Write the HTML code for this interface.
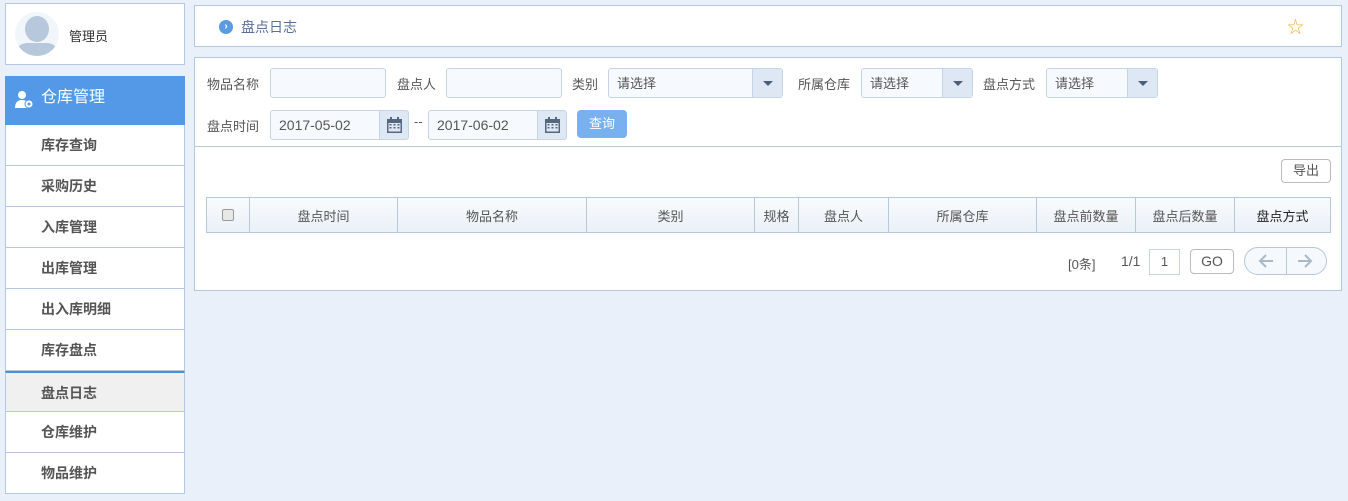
<!DOCTYPE html><html><head><meta charset="utf-8"><style>
*{box-sizing:border-box;margin:0;padding:0}
body{width:1348px;height:501px;background:#e9f0f9;font-family:"Liberation Sans","Noto Sans CJK SC",sans-serif;font-size:13px;color:#555;position:relative;overflow:hidden}
.a{position:absolute}
.box{background:#fff;border:1px solid #b5c8df}
.item{position:absolute;left:5px;width:180px;height:41px;background:#fff;border:1px solid #b5c8df;border-top:none;font-weight:bold;font-size:14px;color:#555;padding-left:35px;line-height:40px}
.inp{position:absolute;height:30px;background:#f6f9fd;border:1px solid #c5d4e6;border-radius:3px;font-size:14px;color:#555;line-height:28px;padding-left:8px}
.lbl{position:absolute;font-size:13px;color:#555}
.sel{position:absolute;height:30px;background:#f6f9fd;border:1px solid #c5d4e6;border-radius:3px;font-size:13px;line-height:30px;padding-left:8px;color:#555}
.sel i{position:absolute;right:0;top:0;width:30px;height:28px;background:#dde8f4;border-left:1px solid #c5d4e6}
.sel i:after{content:"";position:absolute;left:10px;top:12px;border:5px solid transparent;border-top:5px solid #4a5f78;border-bottom:0}
.cal{position:absolute;width:30px;height:30px;background:#dde8f4;border:1px solid #c5d4e6;border-radius:0 3px 3px 0}
th{font-weight:normal;border:1px solid #b5c8df;font-size:13px;color:#555}
</style></head><body>
<div class="a box" style="left:5px;top:3px;width:180px;height:62px">
<div class="a" style="left:9px;top:8px;width:44px;height:44px;border-radius:50%;background:#f1f6fb;overflow:hidden">
<div class="a" style="left:10px;top:4px;width:24px;height:26px;border-radius:50%;background:#b7c8dc"></div>
<div class="a" style="left:0;top:31px;width:44px;height:20px;border-radius:12px 12px 0 0;background:#b7c8dc"></div></div>
<div class="a" style="left:63px;top:22px;font-size:13px;color:#333">管理员</div></div>
<div class="a" style="left:5px;top:76px;width:180px;height:49px;background:#5499e8;color:#fff;font-size:16px;line-height:44px;padding-left:36px">
<svg class="a" style="left:10px;top:14px" width="20" height="20" viewBox="0 0 20 20"><circle cx="7" cy="5" r="4" fill="#fff"/><path d="M0 18c0-6 3-8 7-8s6 2 6 4v4z" fill="#fff"/><circle cx="14" cy="14" r="4" fill="#fff" stroke="#5499e8" stroke-width="1"/><circle cx="14" cy="14" r="1.5" fill="#5499e8"/></svg>仓库管理</div>
<div class="item" style="top:125px">库存查询</div>
<div class="item" style="top:166px">采购历史</div>
<div class="item" style="top:207px">入库管理</div>
<div class="item" style="top:248px">出库管理</div>
<div class="item" style="top:289px">出入库明细</div>
<div class="item" style="top:330px">库存盘点</div>
<div class="item" style="top:371px;background:#f0f0f0;border-top:2px solid #4a90e2;line-height:40px">盘点日志</div>
<div class="item" style="top:412px">仓库维护</div>
<div class="item" style="top:453px">物品维护</div>

<div class="a box" style="left:194px;top:5px;width:1148px;height:42px">
<div class="a" style="left:24px;top:14px;width:14px;height:14px;border-radius:50%;background:#5b9be0;color:#fff;font-size:10px;line-height:13px;text-align:center;font-weight:bold">›</div>
<div class="a" style="left:46px;top:11px;font-size:14px;color:#5a6f9a">盘点日志</div>
<div class="a" style="left:1092px;top:7px;font-size:17px;color:#f3b23c">☆</div></div>

<div class="a box" style="left:194px;top:57px;width:1148px;height:234px">
<div class="a" style="left:0;top:88px;width:1146px;height:1px;background:#b5c8df"></div>
<div class="lbl" style="left:12px;top:16px">物品名称</div>
<div class="inp" style="left:75px;top:10px;width:116px"></div>
<div class="lbl" style="left:202px;top:16px">盘点人</div>
<div class="inp" style="left:251px;top:10px;width:116px"></div>
<div class="lbl" style="left:377px;top:16px">类别</div>
<div class="sel" style="left:413px;top:10px;width:175px">请选择<i></i></div>
<div class="lbl" style="left:603px;top:16px">所属仓库</div>
<div class="sel" style="left:666px;top:10px;width:112px">请选择<i></i></div>
<div class="lbl" style="left:788px;top:16px">盘点方式</div>
<div class="sel" style="left:851px;top:10px;width:112px">请选择<i></i></div>
<div class="lbl" style="left:12px;top:58px">盘点时间</div>
<div class="inp" style="left:75px;top:52px;width:110px;border-radius:3px 0 0 3px">2017-05-02</div>
<div class="cal" style="left:184px;top:52px"><svg class="a" style="left:7px;top:6px" width="15" height="16" viewBox="0 0 15 16"><rect x="0" y="2" width="15" height="14" fill="#55667d"/><rect x="1.5" y="6" width="12" height="8.5" fill="#dde8f4"/><g fill="#55667d"><rect x="2.5" y="7" width="2" height="1.5"/><rect x="6.5" y="7" width="2" height="1.5"/><rect x="10.5" y="7" width="2" height="1.5"/><rect x="2.5" y="10" width="2" height="1.5"/><rect x="6.5" y="10" width="2" height="1.5"/><rect x="10.5" y="10" width="2" height="1.5"/><rect x="3" y="0" width="2" height="4"/><rect x="10" y="0" width="2" height="4"/></g></svg></div>
<div class="lbl" style="left:219px;top:56px">--</div>
<div class="inp" style="left:233px;top:52px;width:110px;border-radius:3px 0 0 3px">2017-06-02</div>
<div class="cal" style="left:342px;top:52px"><svg class="a" style="left:7px;top:6px" width="15" height="16" viewBox="0 0 15 16"><rect x="0" y="2" width="15" height="14" fill="#55667d"/><rect x="1.5" y="6" width="12" height="8.5" fill="#dde8f4"/><g fill="#55667d"><rect x="2.5" y="7" width="2" height="1.5"/><rect x="6.5" y="7" width="2" height="1.5"/><rect x="10.5" y="7" width="2" height="1.5"/><rect x="2.5" y="10" width="2" height="1.5"/><rect x="6.5" y="10" width="2" height="1.5"/><rect x="10.5" y="10" width="2" height="1.5"/><rect x="3" y="0" width="2" height="4"/><rect x="10" y="0" width="2" height="4"/></g></svg></div>
<div class="a" style="left:382px;top:52px;width:50px;height:28px;background:#79b0f0;border-radius:4px;color:#fff;text-align:center;line-height:28px">查询</div>
<div class="a" style="left:1086px;top:101px;width:50px;height:24px;border:1px solid #bbb;border-radius:4px;text-align:center;line-height:22px;color:#555">导出</div>
<table class="a" style="left:11px;top:139px;width:1125px;height:36px;border-collapse:collapse;background:linear-gradient(#f9fbfd,#eaf0f7)"><tr>
<th style="width:43px"><div style="width:12px;height:12px;border:1px solid #999;border-radius:2px;background:#e8e8e8;margin:auto"></div></th>
<th style="width:148px">盘点时间</th><th style="width:189px">物品名称</th><th style="width:168px">类别</th><th style="width:44px">规格</th><th style="width:90px">盘点人</th><th style="width:148px">所属仓库</th><th style="width:99px">盘点前数量</th><th style="width:99px">盘点后数量</th><th style="color:#222">盘点方式</th></tr></table>
<div class="lbl" style="left:873px;top:196px">[0条]</div>
<div class="lbl" style="left:926px;top:195px;font-size:14px">1/1</div>
<div class="a" style="left:954px;top:191px;width:31px;height:26px;border:1px solid #c5d4e6;text-align:center;line-height:24px">1</div>
<div class="a" style="left:995px;top:191px;width:44px;height:25px;border:1px solid #bbb;border-radius:4px;text-align:center;line-height:23px;font-size:14px">GO</div>
<div class="a" style="left:1049px;top:189px;width:83px;height:28px;border:1px solid #b5c8df;border-radius:14px;background:#f5f8fc">
<div class="a" style="left:41px;top:0;width:1px;height:26px;background:#b5c8df"></div>
<svg class="a" style="left:13px;top:6px" width="16" height="14" viewBox="0 0 16 14"><path d="M15 7H2M8 1L2 7l6 6" fill="none" stroke="#aab8c8" stroke-width="2"/></svg>
<svg class="a" style="left:52px;top:6px" width="16" height="14" viewBox="0 0 16 14"><path d="M1 7h13M8 1l6 6-6 6" fill="none" stroke="#aab8c8" stroke-width="2"/></svg>
</div>
</div>
</body></html>
